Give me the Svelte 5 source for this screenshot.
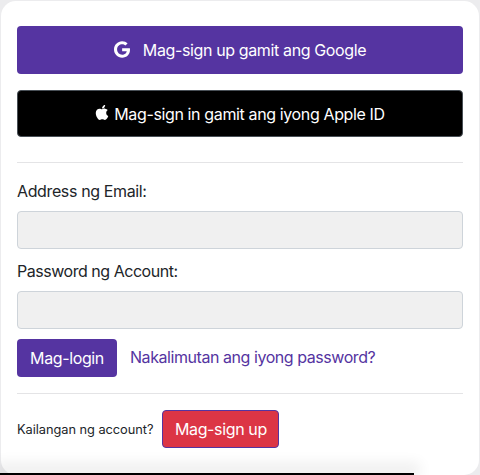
<script>
  let email = $state('');
  let password = $state('');
</script>

<div class="page">
  <main class="card">
    <button class="btn google">
      <svg class="g" viewBox="0 0 488 512" width="16" height="17" aria-hidden="true"><path fill="currentColor" d="M488 261.8C488 403.3 391.1 504 248 504 110.8 504 0 393.2 0 256S110.8 8 248 8c66.8 0 123 24.5 166.3 64.9l-67.5 64.9C258.5 52.6 94.3 116.6 94.3 256c0 86.5 69.1 156.6 153.7 156.6 98.2 0 135-70.4 140.8-106.9H248v-85.3h236.1c2.3 12.7 3.9 24.9 3.9 41.4z"/></svg>
      <span>Mag-sign up gamit ang Google</span>
    </button>
    <button class="btn apple">
      <svg class="a" viewBox="0 0 384 512" width="14" height="17" aria-hidden="true"><path fill="currentColor" d="M318.7 268.7c-.2-36.7 16.4-64.4 50-84.8-18.8-26.9-47.2-41.7-84.7-44.6-35.5-2.8-74.3 20.7-88.5 20.7-15 0-49.4-19.7-76.4-19.7C63.3 141.2 4 184.8 4 273.5q0 39.3 14.4 81.2c12.8 36.7 59 126.7 107.2 125.2 25.2-.6 43-17.9 75.8-17.9 31.8 0 48.3 17.9 76.4 17.9 48.6-.7 90.4-82.5 102.6-119.3-65.2-30.7-61.7-90-61.7-91.9zm-56.6-164.2c27.3-32.4 24.8-61.9 24-72.5-24.1 1.4-52 16.4-67.9 34.9-17.5 19.8-27.8 44.3-25.6 71.9 26.1 2 49.9-11.4 69.5-34.3z"/></svg>
      <span>Mag-sign in gamit ang iyong Apple ID</span>
    </button>
    <hr class="rule first" />
    <form class="form" onsubmit={(e) => e.preventDefault()}>
      <label class="field">
        <span>Address ng Email:</span>
        <input type="email" bind:value={email} />
      </label>
      <label class="field">
        <span class="tight">Password ng Account:</span>
        <input type="password" bind:value={password} />
      </label>
      <div class="actions">
        <button class="btn login" type="submit">Mag-login</button>
        <a href="#forgot">Nakalimutan ang iyong password?</a>
      </div>
    </form>
    <hr class="rule second" />
    <div class="signup">
      <small>Kailangan ng account?</small>
      <button class="btn danger">Mag-sign up</button>
    </div>
  </main>
  <div class="strip"></div>
</div>

<style>
  :global(body) {
    margin: 0;
    background: #ececee;
  }
  .page {
    height: 475px;
    padding: 1px 1px 0;
    box-sizing: border-box;
    overflow: hidden;
    position: relative;
    font-family: Inter, "Liberation Sans", sans-serif;
    font-size: 16px;
    letter-spacing: -0.37px;
    color: #212529;
  }
  .card {
    height: 474px;
    box-sizing: border-box;
    padding: 25px 16px 0;
    background: #fff;
    border-radius: 15px;
    display: flex;
    flex-direction: column;
  }
  .btn {
    font: inherit;
    letter-spacing: inherit;
    color: #fff;
    border: 1px solid transparent;
    border-radius: 4px;
    padding: 0;
    display: flex;
    align-items: center;
    justify-content: center;
    cursor: pointer;
    line-height: 24px;
  }
  .google {
    height: 48px;
    background: #5534a1;
    gap: 13px;
  }
  .google .g {
    margin-top: -2px;
  }
  .apple {
    height: 47px;
    margin-top: 16px;
    background: #000;
    border-color: #495057;
    gap: 5px;
  }
  .apple .a {
    margin-top: -2px;
  }
  .rule {
    border: 0;
    border-top: 1px solid #e4e4e6;
    margin: 0;
    width: 100%;
  }
  .rule.first {
    margin-top: 25px;
  }
  .form {
    display: flex;
    flex-direction: column;
    margin-top: 17px;
  }
  .field {
    display: flex;
    flex-direction: column;
    margin-bottom: 11px;
  }
  .field:nth-child(2) {
    margin-bottom: 10px;
  }
  .field span {
    line-height: 22px;
    margin-bottom: 9px;
  }
  .field .tight {
    letter-spacing: -0.47px;
  }
  input {
    height: 38px;
    box-sizing: border-box;
    background: #f0f0f0;
    border: 1px solid #ced4da;
    border-radius: 4px;
    outline: 0;
    padding: 6px 12px;
    font: inherit;
  }
  .actions {
    display: flex;
    align-items: flex-start;
    gap: 13px;
  }
  .login {
    width: 100px;
    height: 38px;
    background: #5534a1;
    flex: none;
  }
  .actions a {
    color: #5534a1;
    text-decoration: none;
    line-height: 36px;
    letter-spacing: -0.44px;
  }
  .rule.second {
    margin-top: 16px;
  }
  .signup {
    display: flex;
    align-items: center;
    gap: 9px;
    margin-top: 16px;
  }
  small {
    font-size: 12.8px;
    letter-spacing: -0.04px;
  }
  .danger {
    width: 117px;
    height: 38px;
    background: #dc3545;
    border-color: #5534a1;
  }
  .strip {
    position: absolute;
    left: 0;
    bottom: 0;
    width: 414px;
    height: 2px;
    background: #000;
    box-shadow: 0 -4px 14px 6px rgba(0, 0, 0, 0.07);
  }
</style>
